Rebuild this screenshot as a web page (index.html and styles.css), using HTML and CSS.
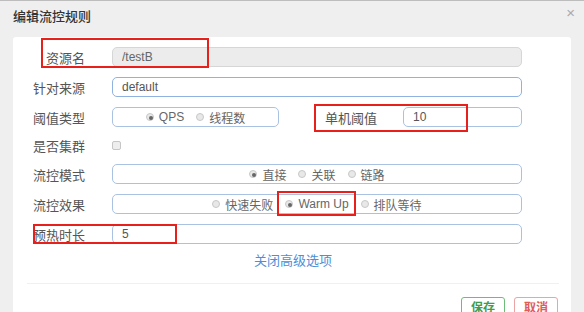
FILE: index.html
```html
<!DOCTYPE html>
<html lang="zh-CN">
<head>
    <meta charset="UTF-8">
    <title>编辑流控规则</title>
    <link rel="stylesheet" href="styles.css">
</head>
<body>
    <div class="modal">
        <div class="modal-header">
            <h4>编辑流控规则</h4>
            <span class="close">&times;</span>
        </div>
        <div class="modal-body">
            <form class="rule-form">
                <div class="form-row">
                    <label class="row-label">资源名</label>
                    <input type="text" class="field" value="/testB" disabled>
                </div>
                <div class="form-row">
                    <label class="row-label">针对来源</label>
                    <input type="text" class="field field-focus" value="default">
                </div>
                <div class="form-row">
                    <label class="row-label">阈值类型</label>
                    <div class="radio-group group-short">
                        <label class="opt"><input type="radio" name="grade" checked>QPS</label>
                        <label class="opt"><input type="radio" name="grade">线程数</label>
                    </div>
                    <label class="row-label label-wide">单机阈值</label>
                    <input type="text" class="field" value="10">
                </div>
                <div class="form-row row-check">
                    <label class="row-label">是否集群</label>
                    <input type="checkbox" class="check">
                </div>
                <div class="form-row">
                    <label class="row-label">流控模式</label>
                    <div class="radio-group">
                        <label class="opt"><input type="radio" name="strategy" checked>直接</label>
                        <label class="opt"><input type="radio" name="strategy">关联</label>
                        <label class="opt"><input type="radio" name="strategy">链路</label>
                    </div>
                </div>
                <div class="form-row">
                    <label class="row-label">流控效果</label>
                    <div class="radio-group">
                        <label class="opt"><input type="radio" name="behavior">快速失败</label>
                        <label class="opt"><input type="radio" name="behavior" checked>Warm Up</label>
                        <label class="opt"><input type="radio" name="behavior">排队等待</label>
                    </div>
                </div>
                <div class="form-row">
                    <label class="row-label">预热时长</label>
                    <input type="text" class="field" value="5">
                </div>
            </form>
            <div class="toggle"><a href="#">关闭高级选项</a></div>
            <div class="modal-footer">
                <button class="btn btn-save">保存</button>
                <button class="btn btn-cancel">取消</button>
            </div>

            <!-- annotation boxes -->
            <div class="mark mark-name"></div>
            <div class="mark mark-count"></div>
            <div class="mark mark-warm"></div>
            <div class="mark mark-warmup"></div>
        </div>
    </div>
</body>
</html>
```

FILE: styles.css
```css
body {
    margin: 0;
    background: #efeff0;
    border-top: 1px solid #bdbdbd;
    font-family: "Liberation Sans", "Noto Sans CJK SC", sans-serif;
    font-size: 13px;
    color: #555;
    height: 311px;
    overflow: hidden;
}
.modal-header {
    display: flex;
    justify-content: space-between;
    align-items: flex-start;
    padding: 7px 9px 11px 13px;
}
.modal-header h4 {
    margin: 0;
    font-size: 13px;
    line-height: 18px;
    font-weight: 500;
    color: #333;
}
.close {
    color: #aaa;
    font-size: 15px;
    line-height: 12px;
    margin-top: -1px;
}
.modal-body {
    position: relative;
    margin: 0 13px;
    background: #fff;
    border-radius: 3px 3px 0 0;
    padding: 10px 12px 10px 14px;
}
.form-row {
    display: flex;
    align-items: center;
    height: 20px;
    margin: 0 37px 10px 0;
}
.row-check {
    height: 17px;
}
.row-label {
    width: 58px;
    flex: none;
    margin-right: 27px;
    text-align: right;
    color: #555;
}
.label-wide {
    width: 98px;
    margin-right: 26px;
}
.field {
    flex: 1;
    min-width: 0;
    height: 20px;
    box-sizing: border-box;
    padding: 0 9px;
    border: 1px solid #a9c2e2;
    border-radius: 5px;
    font-family: "Liberation Sans", sans-serif;
    font-size: 12px;
    color: #555;
    background: #fff;
}
.field:disabled {
    background: #ececec;
    border-color: #d6d6d6;
    color: #666;
}
.field-focus {
    border-color: #8fb2e0;
}
.radio-group {
    flex: 1;
    height: 20px;
    box-sizing: border-box;
    display: flex;
    justify-content: center;
    align-items: center;
    gap: 6px;
    border: 1px solid #a9c2e2;
    border-radius: 5px;
    font-size: 12px;
    color: #666;
}
.group-short {
    flex: none;
    width: 167px;
}
.opt {
    display: flex;
    align-items: center;
    padding: 0 3px;
}
.opt input {
    appearance: none;
    width: 8px;
    height: 8px;
    margin: 0 5px 0 0;
    border: 1px solid #c8c8c8;
    border-radius: 50%;
    background: #e8e8e8;
    position: relative;
}
.opt input:checked::after {
    content: "";
    position: absolute;
    left: 2px;
    top: 2px;
    width: 4px;
    height: 4px;
    border-radius: 50%;
    background: #666;
}
.check {
    appearance: none;
    width: 9px;
    height: 9px;
    margin: 0;
    border: 1px solid #c6c6c6;
    border-radius: 2px;
    background: #eee;
}
.toggle {
    text-align: center;
    margin-top: -1px;
    line-height: 16px;
}
.toggle a {
    color: #4a8fd8;
    text-decoration: none;
}
.modal-footer {
    margin-top: 14px;
    border-top: 1px solid #f0f0f0;
    padding-top: 13px;
    display: flex;
    justify-content: flex-end;
    gap: 9px;
    padding-right: 1px;
}
.btn {
    width: 44px;
    height: 20px;
    padding: 0;
    border-radius: 3px;
    background: #fff;
    font-family: "Noto Sans CJK SC", sans-serif;
    font-size: 12px;
    line-height: 18px;
    font-weight: 700;
    cursor: pointer;
}
.btn-save {
    border: 1px solid #6dbd7a;
    color: #3f9c50;
}
.btn-cancel {
    border: 1px solid #eba3a3;
    color: #e25b5b;
}
.mark {
    position: absolute;
    border: 2px solid #e8201c;
    box-sizing: border-box;
}
.mark-name {
    left: 28px;
    top: 1px;
    width: 168px;
    height: 30px;
}
.mark-count {
    left: 301px;
    top: 67px;
    width: 154px;
    height: 28px;
}
.mark-warm {
    left: 264px;
    top: 154px;
    width: 79px;
    height: 25px;
}
.mark-warmup {
    left: 20px;
    top: 187px;
    width: 144px;
    height: 20px;
}
```
